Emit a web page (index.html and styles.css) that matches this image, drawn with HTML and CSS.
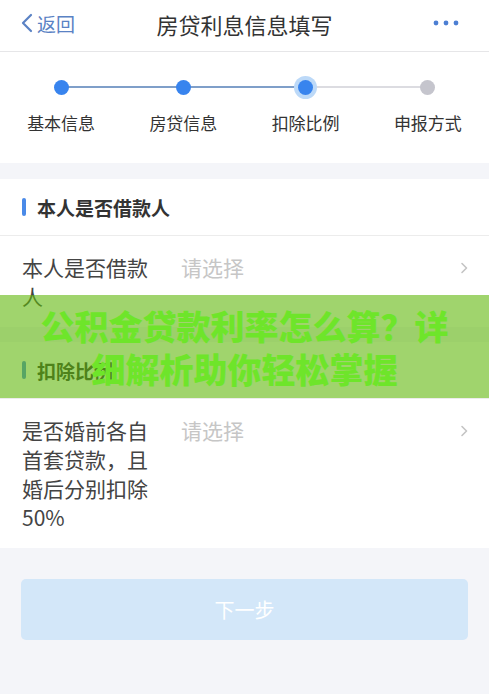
FILE: index.html
```html
<!DOCTYPE html>
<html lang="zh-CN">
<head>
    <meta charset="UTF-8">
    <meta name="viewport" content="width=device-width, initial-scale=1.0">
    <title>房贷利息信息填写</title>
    <link rel="stylesheet" href="styles.css">
</head>
<body>
    <div class="page">
        <header class="nav">
            <a class="nav-back" href="#">
                <svg width="14" height="20" viewBox="0 0 14 20"><polyline points="11,2 3,10 11,18" fill="none" stroke="#5a82c4" stroke-width="2.2" stroke-linecap="round" stroke-linejoin="round"/></svg>
                <span>返回</span>
            </a>
            <h1 class="nav-title">房贷利息信息填写</h1>
            <span class="nav-more">
                <svg width="26" height="6" viewBox="0 0 26 6"><circle cx="3" cy="3" r="2.4" fill="#4d7fd3"/><circle cx="13" cy="3" r="2.4" fill="#4d7fd3"/><circle cx="23" cy="3" r="2.4" fill="#4d7fd3"/></svg>
            </span>
        </header>

        <div class="steps">
            <div class="step done">
                <div class="track"><i class="dot"></i></div>
                <p>基本信息</p>
            </div>
            <div class="step done">
                <div class="track"><i class="dot"></i></div>
                <p>房贷信息</p>
            </div>
            <div class="step current">
                <div class="track"><i class="dot"></i></div>
                <p>扣除比例</p>
            </div>
            <div class="step">
                <div class="track"><i class="dot"></i></div>
                <p>申报方式</p>
            </div>
        </div>

        <section class="card">
            <h2 class="card-title">本人是否借款人</h2>
            <div class="row">
                <div class="row-label">本人是否借款人</div>
                <div class="row-value">请选择</div>
                <svg class="row-arrow" width="8" height="12" viewBox="0 0 8 12"><polyline points="2,1.5 6.5,6 2,10.5" fill="none" stroke="#c4c4c4" stroke-width="1.6" stroke-linecap="round" stroke-linejoin="round"/></svg>
            </div>
        </section>

        <section class="card">
            <h2 class="card-title">扣除比例</h2>
            <div class="row">
                <div class="row-label">是否婚前各自首套贷款，且婚后分别扣除50%</div>
                <div class="row-value">请选择</div>
                <svg class="row-arrow" width="8" height="12" viewBox="0 0 8 12"><polyline points="2,1.5 6.5,6 2,10.5" fill="none" stroke="#c4c4c4" stroke-width="1.6" stroke-linecap="round" stroke-linejoin="round"/></svg>
            </div>
        </section>

        <div class="footer">
            <button class="btn" type="button" disabled>下一步</button>
        </div>

        <div class="banner">公积金贷款利率怎么算？详细解析助你轻松掌握</div>
    </div>
</body>
</html>
```

FILE: styles.css
```css
body {
    margin: 0;
    font-family: "Noto Sans CJK SC", "Noto Sans", sans-serif;
    color: #333;
    background: #f4f5f9;
}

.page {
    position: relative;
    min-height: 694px;
    background: #f4f5f9;
}

/* top bar */
.nav {
    height: 52px;
    box-sizing: border-box;
    display: flex;
    align-items: center;
    justify-content: space-between;
    background: #fff;
    border-bottom: 1px solid #e6e6e8;
    padding: 0 30px 5px 20px;
    position: relative;
}

.nav-back {
    display: flex;
    align-items: center;
    gap: 3px;
    color: #5a82c4;
    text-decoration: none;
    font-size: 19px;
}

.nav-title {
    position: absolute;
    left: 0;
    right: 0;
    top: 9px;
    margin: 0;
    text-align: center;
    font-size: 22px;
    line-height: 30px;
    font-weight: normal;
    color: #333;
    pointer-events: none;
}

.nav-more {
    display: flex;
}

/* progress steps */
.steps {
    display: grid;
    grid-template-columns: repeat(4, 1fr);
    background: #fff;
    padding: 23px 0 29px;
    margin-bottom: 16px;
}

.step .track {
    position: relative;
    height: 24px;
    display: flex;
    align-items: center;
    justify-content: center;
}

.step:not(:last-child) .track::before {
    content: "";
    position: absolute;
    left: 50%;
    width: 100%;
    top: 11px;
    height: 2px;
    background: #dcdce1;
}

.step.done .track::before {
    background: #7f9fc9;
}

.dot {
    position: relative;
    width: 15px;
    height: 15px;
    border-radius: 50%;
    background: #c5c5cd;
}

.step.done .dot,
.step.current .dot {
    background: #3884ee;
}

.step.current .dot {
    box-shadow: 0 0 0 4px #bcd9f8;
}

.step p {
    margin: 13px 0 0;
    text-align: center;
    font-size: 17px;
    line-height: 22px;
    color: #333;
}

/* form cards */
.card {
    background: #fff;
    margin-bottom: 15px;
}

.card-title {
    margin: 0;
    height: 56px;
    display: flex;
    align-items: center;
    padding-left: 22px;
    font-size: 19px;
    font-weight: bold;
    color: #333;
    border-bottom: 1px solid #ececec;
}

.card-title::before {
    content: "";
    width: 4px;
    height: 18px;
    border-radius: 2px;
    background: #4a8ae8;
    margin-right: 11px;
}

.row {
    display: flex;
    align-items: flex-start;
    padding: 17px 22px 16px;
    font-size: 21px;
    line-height: 29px;
}

.row-label {
    width: 130px;
    color: #444;
}

.row-value {
    flex: 1;
    margin-left: 29px;
    color: #c6c6c6;
}

.row-arrow {
    margin-top: 9px;
    margin-right: -1px;
}

/* bottom action */
.footer {
    padding: 16px 21px 0;
}

.btn {
    display: block;
    width: 100%;
    height: 61px;
    border: none;
    border-radius: 5px;
    background: #d3e7f9;
    color: #fff;
    font-family: inherit;
    font-size: 20px;
}

/* promo strip laid over the form */
.banner {
    position: absolute;
    left: 0;
    right: 0;
    top: 295px;
    height: 103px;
    box-sizing: border-box;
    padding: 9px 25px 0;
    background: rgba(96, 184, 12, 0.6);
    color: #6ee52a;
    font-size: 34px;
    font-weight: 900;
    line-height: 43px;
    text-align: center;
}
```
